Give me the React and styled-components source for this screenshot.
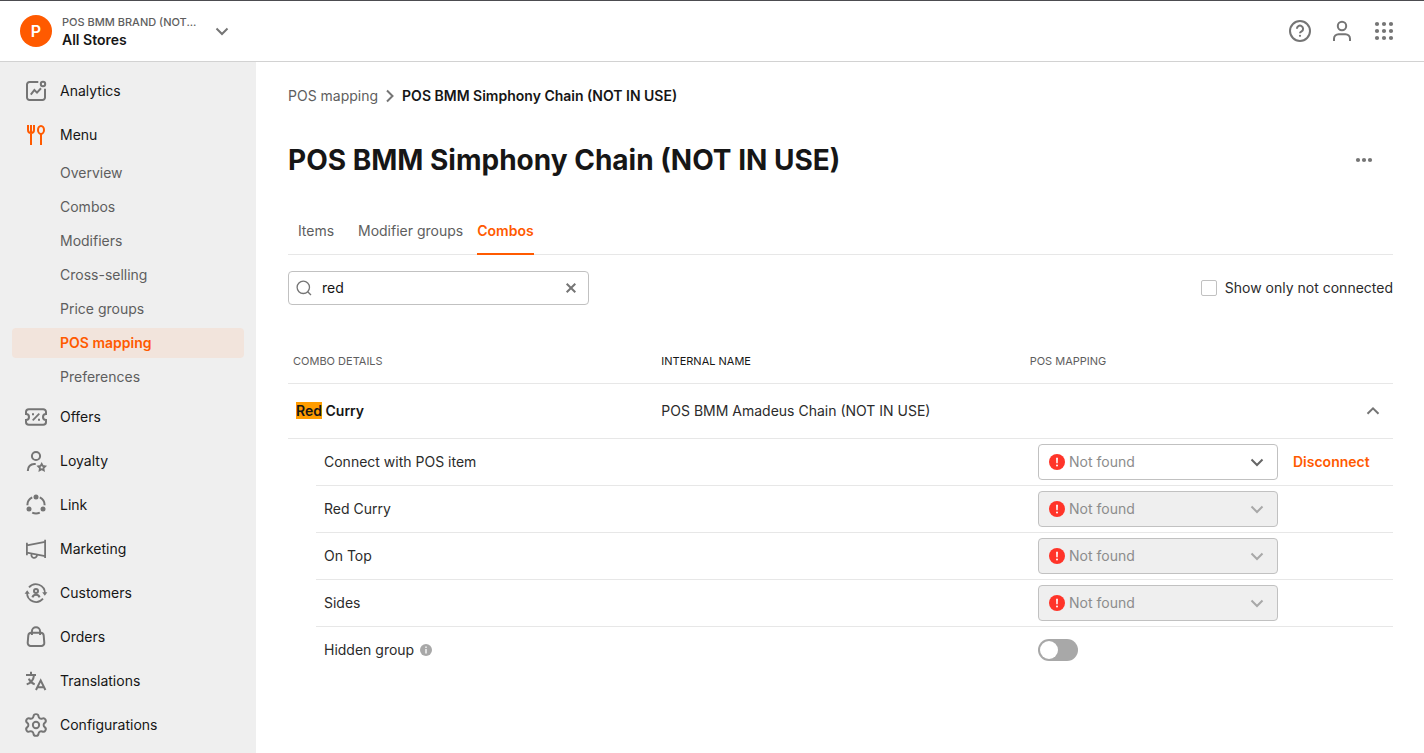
import React, { useState } from 'react';
import styled, { createGlobalStyle, css } from 'styled-components';

const colors = {
  orange: '#ff5a00',
  text: '#161616',
  body: '#2b2b2b',
  muted: '#5e5e5e',
  placeholder: '#8c8c8c',
  icon: '#757575',
  border: '#e7e7e7',
  control: '#c1c1c1',
  surface: '#efefef',
  error: '#ff3429',
};

const GlobalStyle = createGlobalStyle`
  *, *::before, *::after {
    box-sizing: border-box;
  }

  body {
    margin: 0;
    background: #fff;
    color: ${colors.text};
    font-family: Inter, 'Liberation Sans', sans-serif;
    font-size: 14px;
    line-height: 20px;
  }

  button, input, select {
    font: inherit;
    color: inherit;
  }
`;

const Header = styled.header`
  display: flex;
  align-items: center;
  justify-content: space-between;
  height: 62px;
  padding: 0 28px 0 20px;
  border-top: 1px solid #4c4c50;
  border-bottom: 1px solid #d2d2d2;
`;

const IconButton = styled.button`
  display: flex;
  padding: 0;
  border: 0;
  background: none;
  color: ${colors.icon};
  cursor: pointer;
`;

const StoreSwitcher = styled(IconButton)`
  align-items: center;
  gap: 10px;
  text-align: left;
`;

const Avatar = styled.span`
  display: flex;
  align-items: center;
  justify-content: center;
  width: 32px;
  height: 32px;
  border-radius: 50%;
  background: ${colors.orange};
  color: #fff;
  font-size: 16px;
  font-weight: 600;
`;

const StoreName = styled.span`
  display: flex;
  flex-direction: column;
  width: 142px;
  color: ${colors.text};
  font-weight: 600;
  line-height: 18px;
`;

const Brand = styled.span`
  color: ${colors.muted};
  font-size: 11px;
  font-weight: 500;
  white-space: nowrap;
`;

const HeaderActions = styled.div`
  display: flex;
  gap: 18px;
`;

const Layout = styled.div`
  display: flex;
  min-height: calc(100vh - 62px);
`;

const Sidebar = styled.nav`
  flex: 0 0 256px;
  padding: 7px 12px 0;
  background: ${colors.surface};
`;

const NavLink = styled.a`
  display: flex;
  align-items: center;
  gap: 12px;
  height: 44px;
  padding-left: 12px;
  color: ${colors.text};
  text-decoration: none;

  svg {
    color: ${({ $active }) => ($active ? colors.orange : colors.icon)};
  }
`;

const SubNav = styled.div`
  display: flex;
  flex-direction: column;
  gap: 4px;
  padding: 1px 0 3px;
`;

const SubNavLink = styled.a`
  padding: 5px 0 5px 48px;
  border-radius: 4px;
  color: ${colors.muted};
  text-decoration: none;

  ${({ $active }) =>
    $active &&
    css`
      background: #f2e4dc;
      color: ${colors.orange};
      font-weight: 600;
    `}
`;

const Main = styled.main`
  flex: 1;
  min-width: 0;
  padding: 24px 31px 24px 32px;
`;

const Breadcrumb = styled.nav`
  display: flex;
  align-items: center;
  gap: 4px;

  a {
    color: ${colors.muted};
    text-decoration: none;
  }

  span {
    font-weight: 600;
  }

  svg {
    color: ${colors.icon};
  }
`;

const TitleRow = styled.div`
  display: flex;
  align-items: center;
  justify-content: space-between;
  margin-top: 36px;
  padding-right: 17px;
`;

const Title = styled.h1`
  margin: 0;
  font-size: 28px;
  font-weight: 700;
  line-height: 36px;
`;

const Tabs = styled.div`
  display: flex;
  gap: 14px;
  margin-top: 30px;
  border-bottom: 1px solid ${colors.border};
`;

const Tab = styled.button`
  min-width: 56px;
  height: 47px;
  margin-bottom: -1px;
  padding: 0;
  border: 0;
  border-bottom: 2px solid transparent;
  background: none;
  color: ${colors.muted};
  cursor: pointer;

  ${({ $active }) =>
    $active &&
    css`
      border-bottom-color: ${colors.orange};
      color: ${colors.orange};
      font-weight: 600;
    `}
`;

const Filters = styled.div`
  display: flex;
  align-items: center;
  justify-content: space-between;
  margin-top: 16px;
`;

const SearchBox = styled.div`
  display: flex;
  align-items: center;
  gap: 10px;
  width: 301px;
  height: 34px;
  padding: 0 8px 0 7px;
  border: 1px solid ${colors.control};
  border-radius: 4px;
  color: ${colors.icon};
`;

const SearchInput = styled.input`
  flex: 1;
  min-width: 0;
  padding: 0;
  border: 0;
  outline: 0;
  background: none;
  color: ${colors.text};
`;

const CheckboxLabel = styled.label`
  display: flex;
  align-items: center;
  gap: 8px;
  color: ${colors.body};
`;

const Checkbox = styled.input`
  width: 16px;
  height: 16px;
  margin: 0;
  border: 1px solid ${colors.control};
  border-radius: 2px;
  background: #fff;
  appearance: none;

  &:checked {
    border-color: ${colors.orange};
    background: ${colors.orange};
  }
`;

const Table = styled.table`
  width: 100%;
  border-collapse: separate;
  border-spacing: 0;
  table-layout: fixed;
`;

const ComboTable = styled(Table)`
  margin-top: 33px;
`;

const HeadCell = styled.th`
  height: 46px;
  padding: 0 5px;
  border-bottom: 1px solid ${colors.border};
  color: ${({ $sorted }) => ($sorted ? colors.text : colors.muted)};
  font-size: 11px;
  font-weight: 400;
  text-align: left;
  text-transform: uppercase;
`;

const Cell = styled.td`
  height: 55px;
  padding: 0 5px;
  border-bottom: 1px solid ${colors.border};
  color: ${colors.body};
`;

const NameCell = styled(Cell)`
  padding-left: 8px;
  color: ${colors.text};
  font-weight: 600;
`;

const Highlight = styled.mark`
  background: #ff9c00;
  color: inherit;
`;

const CollapseButton = styled(IconButton)`
  margin-left: auto;
  padding-right: 7px;
`;

const DetailsCell = styled.td`
  padding: 0 0 0 28px;
`;

const DetailCell = styled.td`
  height: 47px;
  padding: 0 4px;
  border-bottom: 1px solid ${colors.border};

  tr:last-child > & {
    height: 46px;
    border-bottom: 0;
  }
`;

const DetailName = styled(DetailCell)`
  padding-left: 8px;
  color: ${colors.body};
`;

const DetailLabel = styled.label`
  display: inline-flex;
  align-items: center;
  gap: 6px;
`;

const Mapping = styled.div`
  display: flex;
  align-items: center;
  gap: 15px;
`;

const SelectWrap = styled.div`
  position: relative;
  display: flex;
  align-items: center;
  width: 240px;
  color: ${({ $disabled }) => ($disabled ? '#a8a8a8' : '#666')};

  svg {
    position: absolute;
    pointer-events: none;
  }

  svg:first-child {
    left: 11px;
  }

  svg:last-child {
    right: 13px;
  }
`;

const Select = styled.select`
  width: 100%;
  height: 36px;
  padding: 0 36px 0 30px;
  border: 1px solid ${colors.control};
  border-radius: 4px;
  background: #fff;
  color: ${colors.placeholder};
  appearance: none;

  &:disabled {
    background: ${colors.surface};
    opacity: 1;
  }
`;

const LinkButton = styled.button`
  padding: 0;
  border: 0;
  background: none;
  color: ${colors.orange};
  font-weight: 600;
  cursor: pointer;
`;

const Switch = styled.input`
  display: block;
  width: 40px;
  height: 22px;
  margin: 0;
  padding: 2px;
  border-radius: 11px;
  background: #a8a8a8;
  appearance: none;
  cursor: pointer;

  &::before {
    content: '';
    display: block;
    width: 18px;
    height: 18px;
    border-radius: 50%;
    background: #fff;
  }

  &:checked {
    background: ${colors.orange};
  }

  &:checked::before {
    margin-left: auto;
  }
`;

const Icon = ({ size = 24, box = '0 0 24 24', weight = 2, children }) => (
  <svg
    width={size}
    height={size}
    viewBox={box}
    fill="none"
    stroke="currentColor"
    strokeWidth={weight}
    aria-hidden="true"
  >
    {children}
  </svg>
);

const Chevron = ({ points }) => (
  <Icon size={16} box="0 0 16 16">
    <polyline points={points} />
  </Icon>
);

const DOWN = '2.5 5.5 8 11 13.5 5.5';
const UP = '2.5 10.8 8 5.3 13.5 10.8';
const RIGHT = '5 2.5 10.5 8 5 13.5';

const ErrorIcon = () => (
  <svg width="16" height="16" viewBox="0 0 16 16" aria-hidden="true">
    <circle cx="8" cy="8" r="8" fill={colors.error} />
    <path d="M7.1 3.8h1.8l-.2 5.4H7.3z" fill="#fff" />
    <circle cx="8" cy="11.5" r="1" fill="#fff" />
  </svg>
);

const InfoIcon = () => (
  <svg width="12" height="12" viewBox="0 0 12 12" aria-hidden="true">
    <circle cx="6" cy="6" r="6" fill="#a8a8a8" />
    <path d="M5.2 2.6h1.6v1.5H5.2zM5.2 5h1.6v4.4H5.2z" fill="#efefef" />
  </svg>
);

const icons = {
  analytics: (
    <>
      <path d="M14.3 3H5.5A2.5 2.5 0 0 0 3 5.5v13A2.5 2.5 0 0 0 5.5 21h13a2.5 2.5 0 0 0 2.5-2.5V9.7" />
      <circle cx="19" cy="5" r="2.2" />
      <path d="M6.8 15.6l3.6-4.6 2.6 2.6 4-4.3" />
    </>
  ),
  menu: (
    <>
      <path d="M4 2v5a3 3 0 0 0 6 0V2M7 2v20" />
      <ellipse cx="17" cy="6.9" rx="3" ry="4" />
      <path d="M17 11v11" />
    </>
  ),
  offers: (
    <>
      <path d="M4.8 4.2h14.4A2.8 2.8 0 0 1 22 7v2a3 3 0 0 0 0 6v2a2.8 2.8 0 0 1-2.8 2.8H4.8A2.8 2.8 0 0 1 2 17v-2a3 3 0 0 0 0-6V7a2.8 2.8 0 0 1 2.8-2.8z" />
      <path d="M8.7 15.3l6.6-6.6" strokeWidth="1.8" />
      <path d="M8 9.3h2M14 14.8h2" />
    </>
  ),
  loyalty: (
    <>
      <circle cx="12" cy="7" r="4.1" />
      <path d="M3.9 22v-.8a6.2 6.2 0 0 1 6.2-6.2h1.6" />
      <path
        d="M17.7 14.9l1.1 2.1 2.3.4-1.7 1.6.4 2.4-2.1-1.1-2.1 1.1.4-2.4-1.7-1.6 2.3-.4z"
        strokeWidth="1.8"
      />
    </>
  ),
  link: (
    <>
      <path d="M8.2 4.3a8.6 8.6 0 0 0-4.8 8M15.8 4.3a8.6 8.6 0 0 1 4.8 8M8.2 19.7a9 9 0 0 0 7.6 0" />
      <g fill="currentColor" stroke="none">
        <circle cx="12" cy="3.9" r="2.5" />
        <circle cx="5" cy="16.1" r="2.5" />
        <circle cx="19" cy="16.1" r="2.5" />
      </g>
    </>
  ),
  marketing: (
    <g strokeWidth="1.8">
      <path d="M2.9 5.7v12.5M21.1 2.8v18.3M2.9 8.3l18.2-3.5M2.9 15.6l18.2 3.5" />
      <path d="M7.7 16.8a2.8 2.8 0 1 0 5.3 1.1" />
    </g>
  ),
  customers: (
    <>
      <path d="M5 6.4a9 9 0 0 1 15.9 5.8M19 17.7A9 9 0 0 1 3.1 11.6" strokeWidth="1.8" />
      <path d="M18.2 11.3h5.2l-2.6 3.5zM.6 12.7h5.2L3.2 9.2z" fill="currentColor" stroke="none" />
      <circle cx="12" cy="9.9" r="2" />
      <path d="M8.4 16.4a3.8 3.8 0 0 1 7.2 0" />
    </>
  ),
  orders: (
    <>
      <path d="M7.3 7.8h9.4a3 3 0 0 1 3 2.7l.6 7.3a3 3 0 0 1-3 3.2H6.7a3 3 0 0 1-3-3.2l.6-7.3a3 3 0 0 1 3-2.7z" />
      <path d="M7.9 10V6.4a4.1 4.1 0 0 1 8.2 0V10" />
    </>
  ),
  translations: (
    <>
      <path d="M2 6.1h10M7 2.7v3.4M10 6.1c-.4 4.3-3.2 7.9-7.3 9.3M4.8 9.6c1 2.7 3.1 4.7 5.9 5.8" />
      <path d="M12 21l4.7-9.6L21.4 21M13.6 18.2h6.2" />
    </>
  ),
  configurations: (
    <g transform="translate(12 12) scale(1.09) translate(-12 -12)" strokeWidth="1.8">
      <path d="M9.671 4.136a2.34 2.34 0 0 1 4.659 0 2.34 2.34 0 0 0 3.319 1.915 2.34 2.34 0 0 1 2.33 4.033 2.34 2.34 0 0 0 0 3.831 2.34 2.34 0 0 1-2.33 4.033 2.34 2.34 0 0 0-3.319 1.915 2.34 2.34 0 0 1-4.659 0 2.34 2.34 0 0 0-3.32-1.915 2.34 2.34 0 0 1-2.33-4.033 2.34 2.34 0 0 0 0-3.831A2.34 2.34 0 0 1 6.35 6.051a2.34 2.34 0 0 0 3.319-1.915" />
      <circle cx="12" cy="12" r="2.9" />
    </g>
  ),
};

const subMenu = [
  'Overview',
  'Combos',
  'Modifiers',
  'Cross-selling',
  'Price groups',
  'POS mapping',
  'Preferences',
];

const navigation = [
  { label: 'Analytics', icon: icons.analytics },
  { label: 'Menu', icon: icons.menu, children: subMenu },
  { label: 'Offers', icon: icons.offers },
  { label: 'Loyalty', icon: icons.loyalty },
  { label: 'Link', icon: icons.link },
  { label: 'Marketing', icon: icons.marketing },
  { label: 'Customers', icon: icons.customers },
  { label: 'Orders', icon: icons.orders },
  { label: 'Translations', icon: icons.translations },
  { label: 'Configurations', icon: icons.configurations },
];

const tabs = ['Items', 'Modifier groups', 'Combos'];

const details = [
  { id: 'pos-item', name: 'Connect with POS item', connected: true },
  { id: 'red-curry', name: 'Red Curry' },
  { id: 'on-top', name: 'On Top' },
  { id: 'sides', name: 'Sides' },
];

const TopBar = () => (
  <Header>
    <StoreSwitcher type="button">
      <Avatar>P</Avatar>
      <StoreName>
        <Brand>POS BMM BRAND (NOT...</Brand>
        All Stores
      </StoreName>
      <Chevron points={DOWN} />
    </StoreSwitcher>
    <HeaderActions>
      <IconButton type="button" aria-label="Help">
        <Icon>
          <circle cx="12" cy="12" r="10" />
          <path d="M8.9 9.8a3.1 3.1 0 1 1 4.7 2.6c-1 .6-1.6 1-1.6 1.9" />
          <circle cx="12" cy="16.8" r="1.1" fill="currentColor" stroke="none" />
        </Icon>
      </IconButton>
      <IconButton type="button" aria-label="Account">
        <Icon>
          <circle cx="12" cy="7" r="4.2" />
          <path d="M4 22v-2.2a4.6 4.6 0 0 1 4.600-4.600h6.800a4.600 4.600 0 0 1 4.600 4.600V22" />
        </Icon>
      </IconButton>
      <IconButton type="button" aria-label="Apps">
        <Icon>
          {[5, 12, 19].map(y =>
            [5, 12, 19].map(x => (
              <circle key={`${x}-${y}`} cx={x} cy={y} r="2.1" fill="currentColor" stroke="none" />
            ))
          )}
        </Icon>
      </IconButton>
    </HeaderActions>
  </Header>
);

const SideNav = () => (
  <Sidebar aria-label="Main">
    {navigation.map(({ label, icon, children }) => (
      <React.Fragment key={label}>
        <NavLink href="#" $active={Boolean(children)}>
          <Icon>{icon}</Icon>
          {label}
        </NavLink>
        {children && (
          <SubNav>
            {children.map(child => (
              <SubNavLink key={child} href="#" $active={child === 'POS mapping'}>
                {child}
              </SubNavLink>
            ))}
          </SubNav>
        )}
      </React.Fragment>
    ))}
  </Sidebar>
);

const MappingSelect = ({ id, disabled }) => (
  <SelectWrap $disabled={disabled}>
    <ErrorIcon />
    <Select id={id} disabled={disabled}>
      <option>Not found</option>
    </Select>
    <Chevron points={DOWN} />
  </SelectWrap>
);

const ComboDetails = () => (
  <Table aria-label="Combo details">
    <tbody>
      {details.map(({ id, name, connected }) => (
        <tr key={id}>
          <DetailName colSpan={2}>
            <label htmlFor={id}>{name}</label>
          </DetailName>
          <DetailCell>
            <Mapping>
              <MappingSelect id={id} disabled={!connected} />
              {connected && <LinkButton type="button">Disconnect</LinkButton>}
            </Mapping>
          </DetailCell>
        </tr>
      ))}
      <tr>
        <DetailName colSpan={2}>
          <DetailLabel htmlFor="hidden-group">
            Hidden group
            <InfoIcon />
          </DetailLabel>
        </DetailName>
        <DetailCell>
          <Switch id="hidden-group" type="checkbox" role="switch" />
        </DetailCell>
      </tr>
    </tbody>
  </Table>
);

const App = () => {
  const [activeTab, setActiveTab] = useState('Combos');
  const [query, setQuery] = useState('red');
  const [open, setOpen] = useState(true);

  return (
    <>
      <GlobalStyle />
      <TopBar />
      <Layout>
        <SideNav />
        <Main>
          <Breadcrumb aria-label="Breadcrumb">
            <a href="#">POS mapping</a>
            <Chevron points={RIGHT} />
            <span>POS BMM Simphony Chain (NOT IN USE)</span>
          </Breadcrumb>

          <TitleRow>
            <Title>POS BMM Simphony Chain (NOT IN USE)</Title>
            <IconButton type="button" aria-label="More actions">
              <Icon>
                {[6, 12, 18].map(x => (
                  <circle key={x} cx={x} cy="12" r="2.1" fill="currentColor" stroke="none" />
                ))}
              </Icon>
            </IconButton>
          </TitleRow>

          <Tabs role="tablist">
            {tabs.map(tab => (
              <Tab
                key={tab}
                type="button"
                role="tab"
                aria-selected={tab === activeTab}
                $active={tab === activeTab}
                onClick={() => setActiveTab(tab)}
              >
                {tab}
              </Tab>
            ))}
          </Tabs>

          <Filters>
            <SearchBox>
              <Icon size={16} box="0 0 16 16" weight={1.3}>
                <circle cx="7.3" cy="7.3" r="6.2" />
                <path d="M11.7 11.7l3.3 3.3" />
              </Icon>
              <SearchInput
                type="text"
                aria-label="Search combos"
                value={query}
                onChange={e => setQuery(e.target.value)}
              />
              <IconButton type="button" aria-label="Clear search" onClick={() => setQuery('')}>
                <Icon size={18} box="0 0 18 18">
                  <path d="M4.7 4.7l8.6 8.6M13.3 4.7l-8.6 8.6" />
                </Icon>
              </IconButton>
            </SearchBox>
            <CheckboxLabel>
              <Checkbox type="checkbox" />
              Show only not connected
            </CheckboxLabel>
          </Filters>

          <ComboTable>
            <thead>
              <tr>
                <HeadCell>Combo details</HeadCell>
                <HeadCell $sorted>Internal name</HeadCell>
                <HeadCell>POS mapping</HeadCell>
              </tr>
            </thead>
            <tbody>
              <tr>
                <NameCell>
                  <Highlight>Red</Highlight> Curry
                </NameCell>
                <Cell>POS BMM Amadeus Chain (NOT IN USE)</Cell>
                <Cell>
                  <CollapseButton
                    type="button"
                    aria-label="Toggle combo"
                    aria-expanded={open}
                    onClick={() => setOpen(!open)}
                  >
                    <Chevron points={UP} />
                  </CollapseButton>
                </Cell>
              </tr>
              {open && (
                <tr>
                  <DetailsCell colSpan={3}>
                    <ComboDetails />
                  </DetailsCell>
                </tr>
              )}
            </tbody>
          </ComboTable>
        </Main>
      </Layout>
    </>
  );
};

export default App;
